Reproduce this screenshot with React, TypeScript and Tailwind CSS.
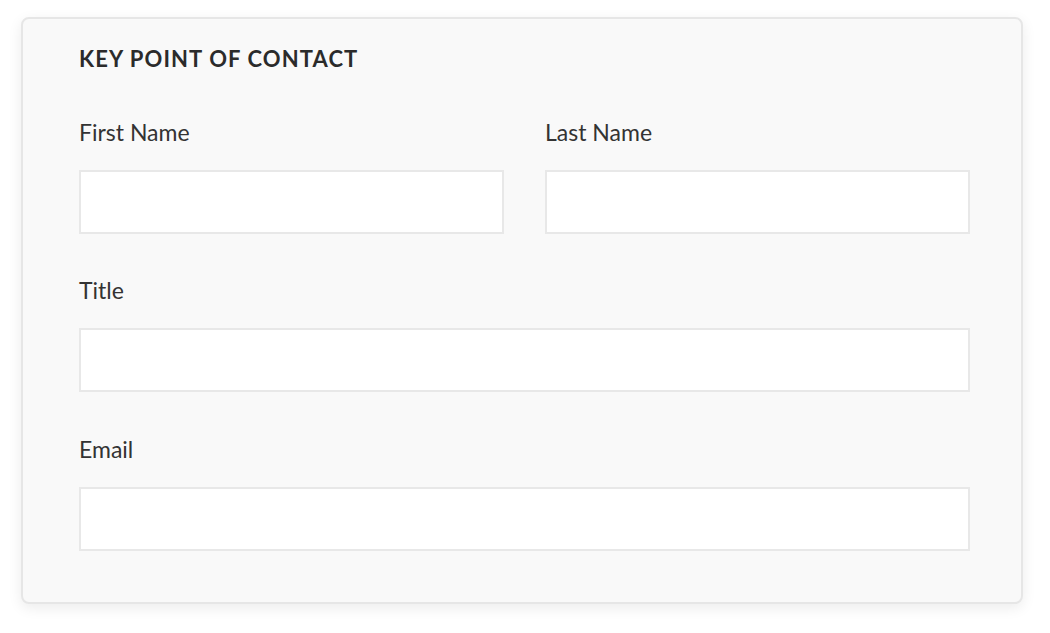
// Key point of contact card: heading, first/last name row, title, email
const Field = ({ label }: { label: string }) => (
  <div className="flex flex-col">
    <label className="text-[23px] leading-[28px] text-[#333333]">{label}</label>
    <input
      type="text"
      className="mt-[24px] h-[64px] w-full border-2 border-[#e8e8e8] bg-white px-3 outline-none"
    />
  </div>
);

const App = () => {
  return (
    <div className="min-h-screen bg-white pl-[21px] pr-[27px] pt-[17px] font-['Lato','Liberation_Sans',sans-serif]">
      <div className="rounded-[8px] border-2 border-[#e6e6e6] bg-[#f9f9f9] pl-[56px] pr-[51px] pt-[26px] pb-[51px] shadow-[0_4px_14px_rgba(0,0,0,0.08)]">
        <h2 className="text-[22px] font-bold leading-[28px] tracking-[0.05em] text-[#2b2b2b]">
          KEY POINT OF CONTACT
        </h2>
        <div className="mt-[45px] grid grid-cols-2 gap-x-[41px]">
          <Field label="First Name" />
          <Field label="Last Name" />
        </div>
        <div className="mt-[42px]">
          <Field label="Title" />
        </div>
        <div className="mt-[43px]">
          <Field label="Email" />
        </div>
      </div>
    </div>
  );
};

export default App;
